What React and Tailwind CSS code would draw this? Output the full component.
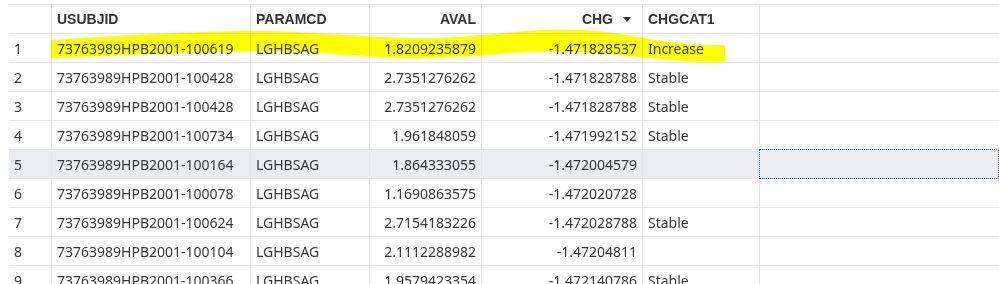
import React from "react";

const rows = [
  { n: 1, id: "73763989HPB2001-100619", param: "LGHBSAG", aval: "1.8209235879", chg: "-1.471828537", cat: "Increase" },
  { n: 2, id: "73763989HPB2001-100428", param: "LGHBSAG", aval: "2.7351276262", chg: "-1.471828788", cat: "Stable" },
  { n: 3, id: "73763989HPB2001-100428", param: "LGHBSAG", aval: "2.7351276262", chg: "-1.471828788", cat: "Stable" },
  { n: 4, id: "73763989HPB2001-100734", param: "LGHBSAG", aval: "1.961848059", chg: "-1.471992152", cat: "Stable" },
  { n: 5, id: "73763989HPB2001-100164", param: "LGHBSAG", aval: "1.864333055", chg: "-1.472004579", cat: "" },
  { n: 6, id: "73763989HPB2001-100078", param: "LGHBSAG", aval: "1.1690863575", chg: "-1.472020728", cat: "" },
  { n: 7, id: "73763989HPB2001-100624", param: "LGHBSAG", aval: "2.7154183226", chg: "-1.472028788", cat: "Stable" },
  { n: 8, id: "73763989HPB2001-100104", param: "LGHBSAG", aval: "2.1112288982", chg: "-1.47204811", cat: "" },
  { n: 9, id: "73763989HPB2001-100366", param: "LGHBSAG", aval: "1.9579423354", chg: "-1.472140786", cat: "Stable" },
];

const cols = "grid grid-cols-[43px_199px_119px_112px_161px_117px_1fr]";
const cell = "border-r border-[#e6e6e6] flex items-center overflow-hidden whitespace-nowrap";

const Header = () => (
  <div className={`${cols} h-[30px] border-y border-[#e6e6e6] font-['Liberation_Sans',Arial,sans-serif] font-bold text-[14px] text-[#333]`}>
    <div className={cell} />
    <div className={`${cell} pl-[5px]`}>USUBJID</div>
    <div className={`${cell} pl-[5px]`}>PARAMCD</div>
    <div className={`${cell} justify-end pr-[5px]`}>AVAL</div>
    <div className={`${cell} justify-end pr-[11px] gap-[10px]`}>
      <span>CHG</span>
      <svg width="8" height="5" viewBox="0 0 8 5">
        <path d="M0 0 H8 L4 5 Z" fill="#333" />
      </svg>
    </div>
    <div className={`${cell} pl-[5px]`}>CHGCAT1</div>
    <div />
  </div>
);

const Row = ({ r }) => {
  const active = r.n === 5;
  return (
    <div className={`${cols} h-[29px] border-b border-[#e6e6e6] ${active ? "bg-[#eaecf0]" : ""}`}>
      <div className={`${cell} pl-[5px]`}>{r.n}</div>
      <div className={`${cell} pl-[5px]`}>{r.id}</div>
      <div className={`${cell} pl-[5px]`}>{r.param}</div>
      <div className={`${cell} justify-end pr-[5px]`}>{r.aval}</div>
      <div className={`${cell} justify-end pr-[5px]`}>{r.chg}</div>
      <div className={`${cell} pl-[5px]`}>{r.cat}</div>
      <div className="relative">
        {active && (
          <div className="absolute -top-px -bottom-px -left-px right-0 border border-dotted border-[#1565a8]" />
        )}
      </div>
    </div>
  );
};

export default function App() {
  return (
    <div className="w-[999px] h-[284px] overflow-hidden bg-white pt-[4px] pl-[9px]">
      <div className="relative font-['Noto_Sans',sans-serif] text-[14px] text-[#383838]">
        <Header />
        {rows.map((r) => (
          <Row key={r.n} r={r} />
        ))}
        <svg
          className="absolute left-[-9px] top-[-4px] pointer-events-none mix-blend-multiply"
          width="999"
          height="100"
          viewBox="0 0 999 100"
        >
          <path
            d="M51 40 C110 36 190 31 260 31 C330 32 380 39 430 38 C470 37 500 33 540 30 C580 28 610 31 650 39 C680 44 700 45 725 45 L725 62 C700 62 670 60 640 57 C600 52 560 50 520 52 C480 55 450 58 410 58 C360 57 320 51 260 51 C200 51 130 55 51 58 Z"
            fill="#ffff00"
          />
        </svg>
      </div>
    </div>
  );
}
